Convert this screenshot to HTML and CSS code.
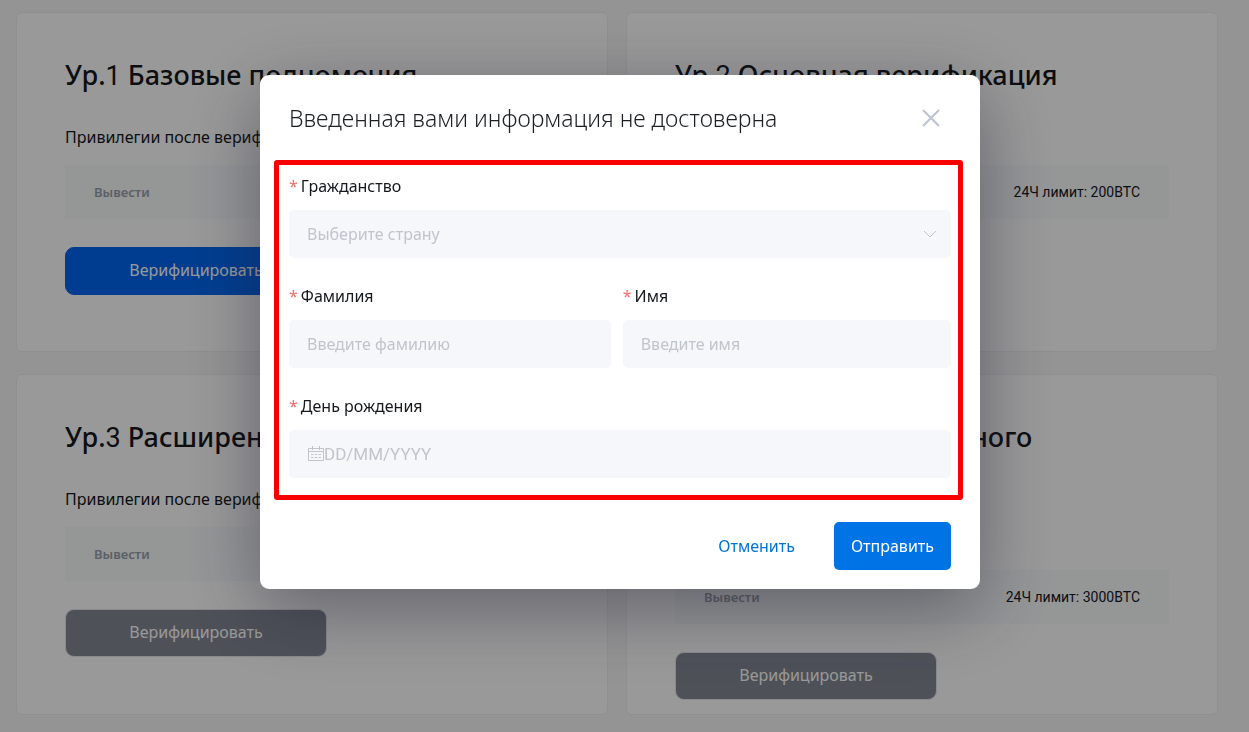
FILE: index.html
```html
<!DOCTYPE html>
<html lang="ru">
  <head>
    <meta charset="UTF-8" />
    <meta name="viewport" content="width=device-width, initial-scale=1.0" />
    <title>Верификация</title>
    <link rel="stylesheet" href="styles.css" />
  </head>

  <body>
    <main class="levels">
      <section class="card">
        <h2>Ур.<span class="num">1</span> Базовые полномочия</h2>
        <p class="card-sub">Привилегии после верификации</p>
        <div class="limit">
          <span class="limit-name">Вывести</span>
          <span class="limit-value">24Ч лимит: 2BTC</span>
        </div>
        <button type="button" class="btn-verify primary">Верифицировать</button>
      </section>

      <section class="card">
        <h2>Ур.<span class="num">2</span> Основная верификация</h2>
        <p class="card-sub">Привилегии после верификации</p>
        <div class="limit">
          <span class="limit-name">Вывести</span>
          <span class="limit-value">24Ч лимит: 200BTC</span>
        </div>
      </section>

      <section class="card">
        <h2>Ур.<span class="num">3</span> Расширенная</h2>
        <p class="card-sub">Привилегии после верификации</p>
        <div class="limit">
          <span class="limit-name">Вывести</span>
          <span class="limit-value">24Ч лимит</span>
        </div>
        <button type="button" class="btn-verify">Верифицировать</button>
      </section>

      <section class="card">
        <h2>Ур.<span class="num">4</span> Повышение дневного<br />лимита</h2>
        <p class="card-sub">Привилегии после верификации</p>
        <div class="limit">
          <span class="limit-name">Вывести</span>
          <span class="limit-value">24Ч лимит: 3000BTC</span>
        </div>
        <button type="button" class="btn-verify">Верифицировать</button>
      </section>
    </main>

    <div class="overlay">
      <form class="modal" role="dialog" aria-labelledby="modal-title">
        <header class="modal-header">
          <h1 id="modal-title">Введенная вами информация не достоверна</h1>
          <button type="button" class="btn-close" aria-label="Закрыть">
            <svg width="20" height="20" viewBox="0 0 20 20">
              <path d="M2 2l16 16M18 2L2 18" />
            </svg>
          </button>
        </header>

        <div class="fields">
          <div class="field">
            <label for="country">Гражданство</label>
            <div class="select-wrap">
              <select id="country">
                <option value="">Выберите страну</option>
              </select>
              <svg class="arrow" width="14" height="8" viewBox="0 0 14 8">
                <path d="M1 1l6 6 6-6" />
              </svg>
            </div>
          </div>

          <div class="field-row">
            <div class="field">
              <label for="surname">Фамилия</label>
              <input type="text" id="surname" placeholder="Введите фамилию" />
            </div>
            <div class="field">
              <label for="name">Имя</label>
              <input type="text" id="name" placeholder="Введите имя" />
            </div>
          </div>

          <div class="field">
            <label for="birthday">День рождения</label>
            <div class="date-wrap">
              <svg width="17" height="16" viewBox="0 0 17 16">
                <path d="M1.500 2.500h15v12h-15zM1.500 5.500h15M5.500 0v4M12.500 0v4M4 8.500h2.500M7.750 8.500h2.500M11.500 8.500H14M4 11.500h2.500M7.750 11.500h2.500M11.500 11.500H14" />
              </svg>
              <input type="text" id="birthday" placeholder="DD/MM/YYYY" />
            </div>
          </div>
        </div>

        <footer class="modal-footer">
          <button type="button" class="btn btn-cancel">Отменить</button>
          <button type="submit" class="btn btn-send">Отправить</button>
        </footer>
      </form>
    </div>
  </body>
</html>
```

FILE: styles.css
```css
* {
  box-sizing: border-box;
}

body {
  margin: 0;
  background: #f7f7f7;
  color: #15181c;
  font-family: "Noto Sans", "Open Sans", sans-serif;
  font-size: 16px;
  line-height: 24px;
}

h1,
h2,
p {
  margin: 0;
}

button,
input,
select {
  font: inherit;
}

button {
  cursor: pointer;
  border: none;
}

svg {
  fill: none;
  stroke: #c0c4cc;
}

/* verification levels */
.levels {
  display: grid;
  grid-template-columns: 1fr 1fr;
  gap: 22px 18px;
  padding: 12px 31px 18px 16px;
}

.card {
  min-height: 340px;
  padding: 40px 48px 14px;
  border: 1px solid #eeeff2;
  border-radius: 6px;
  background: #fff;
}

.card h2 {
  font-size: 27px;
  font-weight: 500;
  line-height: 43px;
}

.num {
  font-family: Roboto, sans-serif;
  font-weight: 400;
}

.card-sub {
  margin: 27px 0 16px;
}

.limit {
  display: flex;
  justify-content: space-between;
  align-items: center;
  height: 54px;
  padding: 0 29px;
  background: #f8fafb;
  font-size: 13px;
}

.limit-name {
  color: #9aa0aa;
  font-weight: 600;
}

.limit-value {
  font-family: Roboto, sans-serif;
  font-size: 14px;
}

.btn-verify {
  display: block;
  width: 262px;
  height: 48px;
  margin-top: 28px;
  padding-bottom: 3px;
  border: 1px solid #e4e6ea;
  border-radius: 9px;
  background: #828793;
  color: #fff;
}

.btn-verify.primary {
  border-color: #0066f0;
  background: #0066f0;
}

/* modal */
.overlay {
  position: fixed;
  inset: 0;
  overflow: auto;
  padding: 75px 9px 0 0;
  background: rgba(0, 0, 0, 0.4);
}

.modal {
  max-width: 720px;
  margin: 0 auto;
  padding: 27px 29px 19px;
  border-radius: 9px;
  background: #fff;
  box-shadow: 0 20px 72px rgba(30, 30, 50, 0.45);
}

.modal-header {
  display: flex;
  justify-content: space-between;
  align-items: center;
  height: 32px;
  margin-bottom: 26px;
}

.modal-header h1 {
  color: #1c1f24;
  font-size: 23px;
  font-weight: 300;
  line-height: 32px;
}

.btn-close {
  display: flex;
  padding: 10px;
  background: none;
}

.btn-close svg {
  stroke: #bcc3ce;
  stroke-width: 2;
}

.fields {
  display: grid;
  gap: 26px;
  margin: 0 -12px 22px -15px;
  padding: 9px 7px 17px 10px;
  border: 5px solid #f80000;
  border-radius: 3px;
}

.field-row {
  display: grid;
  grid-template-columns: 49fr 50fr;
  gap: 12px;
}

.field label {
  display: block;
  margin-bottom: 12px;
}

.field label::before {
  content: "*";
  margin-right: 3px;
  color: #f56c6c;
}

.field input,
.field select,
.date-wrap {
  width: 100%;
  height: 48px;
  padding: 0 18px;
  border: none;
  border-radius: 5px;
  background: #f5f7fb;
  color: #15181c;
}

.field select {
  appearance: none;
  color: #c0c4cc;
}

.field input::placeholder {
  color: #c0c4cc;
  opacity: 1;
}

.select-wrap {
  position: relative;
}

.arrow {
  position: absolute;
  top: 20px;
  right: 14px;
  pointer-events: none;
}

.date-wrap {
  display: flex;
  align-items: center;
}

.date-wrap svg {
  flex: none;
}

.date-wrap input {
  padding: 0;
  background: none;
  font-family: Roboto, sans-serif;
  font-size: 17px;
}

.modal-footer {
  display: flex;
  justify-content: flex-end;
  gap: 22px;
}

.btn {
  height: 48px;
  padding: 0 17px;
  border-radius: 5px;
}

.btn-cancel {
  background: none;
  color: #0073d5;
}

.btn-send {
  background: #0073e6;
  color: #fff;
}
```
